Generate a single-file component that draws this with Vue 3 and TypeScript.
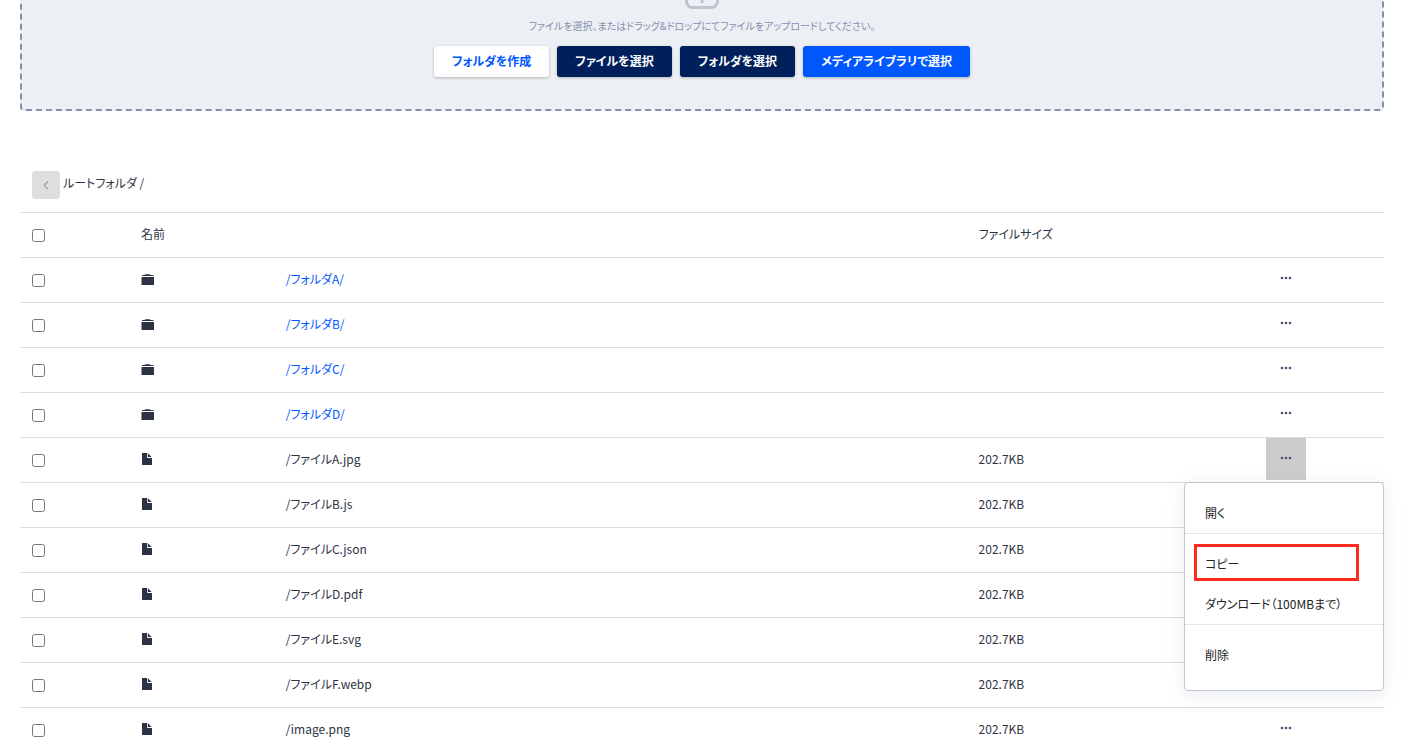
<script setup lang="ts">
import { ref } from 'vue'

interface Entry {
  name: string
  kind: 'folder' | 'file'
  size?: string
}

const folder = (name: string): Entry => ({ name, kind: 'folder' })
const file = (name: string): Entry => ({ name, kind: 'file', size: '202.7KB' })

const entries: Entry[] = [
  folder('/フォルダA/'),
  folder('/フォルダB/'),
  folder('/フォルダC/'),
  folder('/フォルダD/'),
  file('/ファイルA.jpg'),
  file('/ファイルB.js'),
  file('/ファイルC.json'),
  file('/ファイルD.pdf'),
  file('/ファイルE.svg'),
  file('/ファイルF.webp'),
  file('/image.png'),
]

const openMenu = ref<string | null>('/ファイルA.jpg')
const toggleMenu = (name: string) => {
  openMenu.value = openMenu.value === name ? null : name
}
</script>

<template>
  <main class="page">
    <section class="dropzone">
      <svg class="upload-icon" viewBox="0 0 34 34" aria-hidden="true">
        <rect x="1.5" y="1.5" width="31" height="31" rx="6" />
        <path d="M17 28V10M10 16l7-7 7 7" />
      </svg>
      <p class="hint">ファイルを選択、またはドラッグ&amp;ドロップにてファイルをアップロードしてください。</p>
      <div class="buttons">
        <button type="button" class="btn light">フォルダを作成</button>
        <button type="button" class="btn dark">ファイルを選択</button>
        <button type="button" class="btn dark">フォルダを選択</button>
        <button type="button" class="btn primary">メディアライブラリで選択</button>
      </div>
    </section>

    <nav class="path">
      <button type="button" class="back" aria-label="戻る" disabled>
        <svg viewBox="0 0 28 28" aria-hidden="true"><path d="M16 10.5l-3.8 3.8 3.8 3.8" /></svg>
      </button>
      <span>ルートフォルダ /</span>
    </nav>

    <table class="files">
      <colgroup>
        <col class="c-check" />
        <col class="c-icon" />
        <col class="c-name" />
        <col class="c-size" />
        <col class="c-action" />
      </colgroup>
      <thead>
        <tr>
          <th><input type="checkbox" aria-label="すべて選択" /></th>
          <th colspan="2" scope="col">名前</th>
          <th scope="col">ファイルサイズ</th>
          <th></th>
        </tr>
      </thead>
      <tbody>
        <tr v-for="entry in entries" :key="entry.name">
          <td><input type="checkbox" :aria-label="entry.name" /></td>
          <td>
            <svg v-if="entry.kind === 'folder'" class="kind" viewBox="0 0 14 14" aria-hidden="true">
              <path d="M1 3h2.5l1-0.8h4l1 0.8h3v1H1zM0.5 5H13v8H0.5z" />
            </svg>
            <svg v-else class="kind" viewBox="0 0 14 14" aria-hidden="true">
              <path d="M1 1h5.2v5H11v7H1z" />
              <path class="fold" d="M7 1.2L10.6 5H7z" />
            </svg>
          </td>
          <td>
            <a v-if="entry.kind === 'folder'" href="#">{{ entry.name }}</a>
            <template v-else>{{ entry.name }}</template>
          </td>
          <td>{{ entry.size }}</td>
          <td class="action">
            <button
              type="button"
              class="more"
              :class="{ open: openMenu === entry.name }"
              :aria-label="entry.name + ' メニュー'"
              @click="toggleMenu(entry.name)"
            >
              <svg viewBox="0 0 12 4" aria-hidden="true">
                <circle cx="2" cy="2" r="1.3" />
                <circle cx="6" cy="2" r="1.3" />
                <circle cx="10" cy="2" r="1.3" />
              </svg>
            </button>
            <div v-if="openMenu === entry.name" class="menu">
              <div class="group"><button type="button">開く</button></div>
              <div class="group">
                <button type="button" class="marked">コピー</button>
                <button type="button">ダウンロード（100MBまで）</button>
              </div>
              <div class="group"><button type="button">削除</button></div>
            </div>
          </td>
        </tr>
      </tbody>
    </table>
  </main>
</template>

<style>
html,
body {
  overflow: hidden;
  background: #fff;
}
</style>

<style scoped>
.page {
  padding: 0 19px 0 20px;
  font-family: 'Noto Sans CJK JP', sans-serif;
  font-size: 12px;
  line-height: 20px;
  font-feature-settings: 'palt';
  color: #2d3344;
}
button {
  font: inherit;
  font-feature-settings: inherit;
  color: inherit;
  border: 0;
  padding: 0;
  background: none;
  cursor: pointer;
}
.dropzone {
  display: flex;
  flex-direction: column;
  align-items: center;
  margin-top: -60px;
  padding: 33px 20px 32px;
  background: #ecf0f5;
  border: 2px dashed #868eae;
  border-radius: 4px;
}
.upload-icon {
  width: 34px;
  height: 34px;
  fill: none;
  stroke: #bcc3d1;
  stroke-width: 3;
}
.hint {
  margin: 8px 0 11px;
  font-size: 10px;
  line-height: 18px;
  color: #868eae;
}
.buttons {
  display: flex;
  gap: 8px;
}
.btn {
  height: 31px;
  padding: 0 18px 1px;
  font-weight: 700;
  border-radius: 3px;
  box-shadow: 0 1px 3px rgba(0, 0, 0, 0.25);
}
.light {
  background: #fff;
  color: #0057ff;
}
.dark {
  background: #00205b;
  color: #fff;
}
.primary {
  background: #0057ff;
  color: #fff;
}
.path {
  display: flex;
  gap: 3px;
  margin-top: 60px;
  padding: 0 12px 13px;
  line-height: 24px;
}
.back {
  width: 28px;
  height: 28px;
  background: #dddfde;
  border-radius: 3px;
}
.back svg {
  display: block;
  fill: none;
  stroke: #9699a5;
  stroke-width: 1.2;
}
.files {
  width: 100%;
  table-layout: fixed;
  border-collapse: separate;
  border-spacing: 0;
}
.c-check {
  width: 8%;
}
.c-icon {
  width: 10.6%;
}
.c-name {
  width: 50.8%;
}
.c-size {
  width: 21.1%;
}
.c-action {
  width: 9.5%;
}
th,
td {
  box-sizing: border-box;
  height: 45px;
  padding: 0 12px 2px;
  border-top: 1px solid #dadce6;
  text-align: left;
  font-weight: 400;
}
input {
  display: block;
  width: 13px;
  height: 13px;
  margin: 2px 0 0;
}
a {
  color: #0057ff;
  text-decoration: none;
}
.kind {
  display: block;
  width: 14px;
  height: 14px;
  fill: #2d3344;
}
.action {
  position: relative;
  vertical-align: top;
}
.more {
  display: flex;
  align-items: center;
  justify-content: center;
  width: 40px;
  height: 42px;
  padding-bottom: 2px;
}
.more svg {
  width: 12px;
  height: 4px;
  fill: #474e6c;
}
.more.open {
  background: #cccccc;
}
.menu {
  position: absolute;
  z-index: 1;
  top: 44px;
  right: 0;
  box-sizing: border-box;
  width: 200px;
  padding-bottom: 15px;
  background: #fff;
  border: 1px solid #c3c7cf;
  border-radius: 4px;
  box-shadow: 0 4px 20px rgba(60, 90, 120, 0.12);
  color: #222;
}
.group {
  display: flex;
  flex-direction: column;
  padding-top: 10px;
}
.group + .group {
  border-top: 1px solid #e4e6ea;
}
.group button {
  padding: 10px 20px;
  text-align: left;
}
.marked {
  position: relative;
}
.marked::after {
  content: '';
  position: absolute;
  inset: 0 24px 3px 9px;
  border: 3px solid #fb2a1c;
}
</style>
